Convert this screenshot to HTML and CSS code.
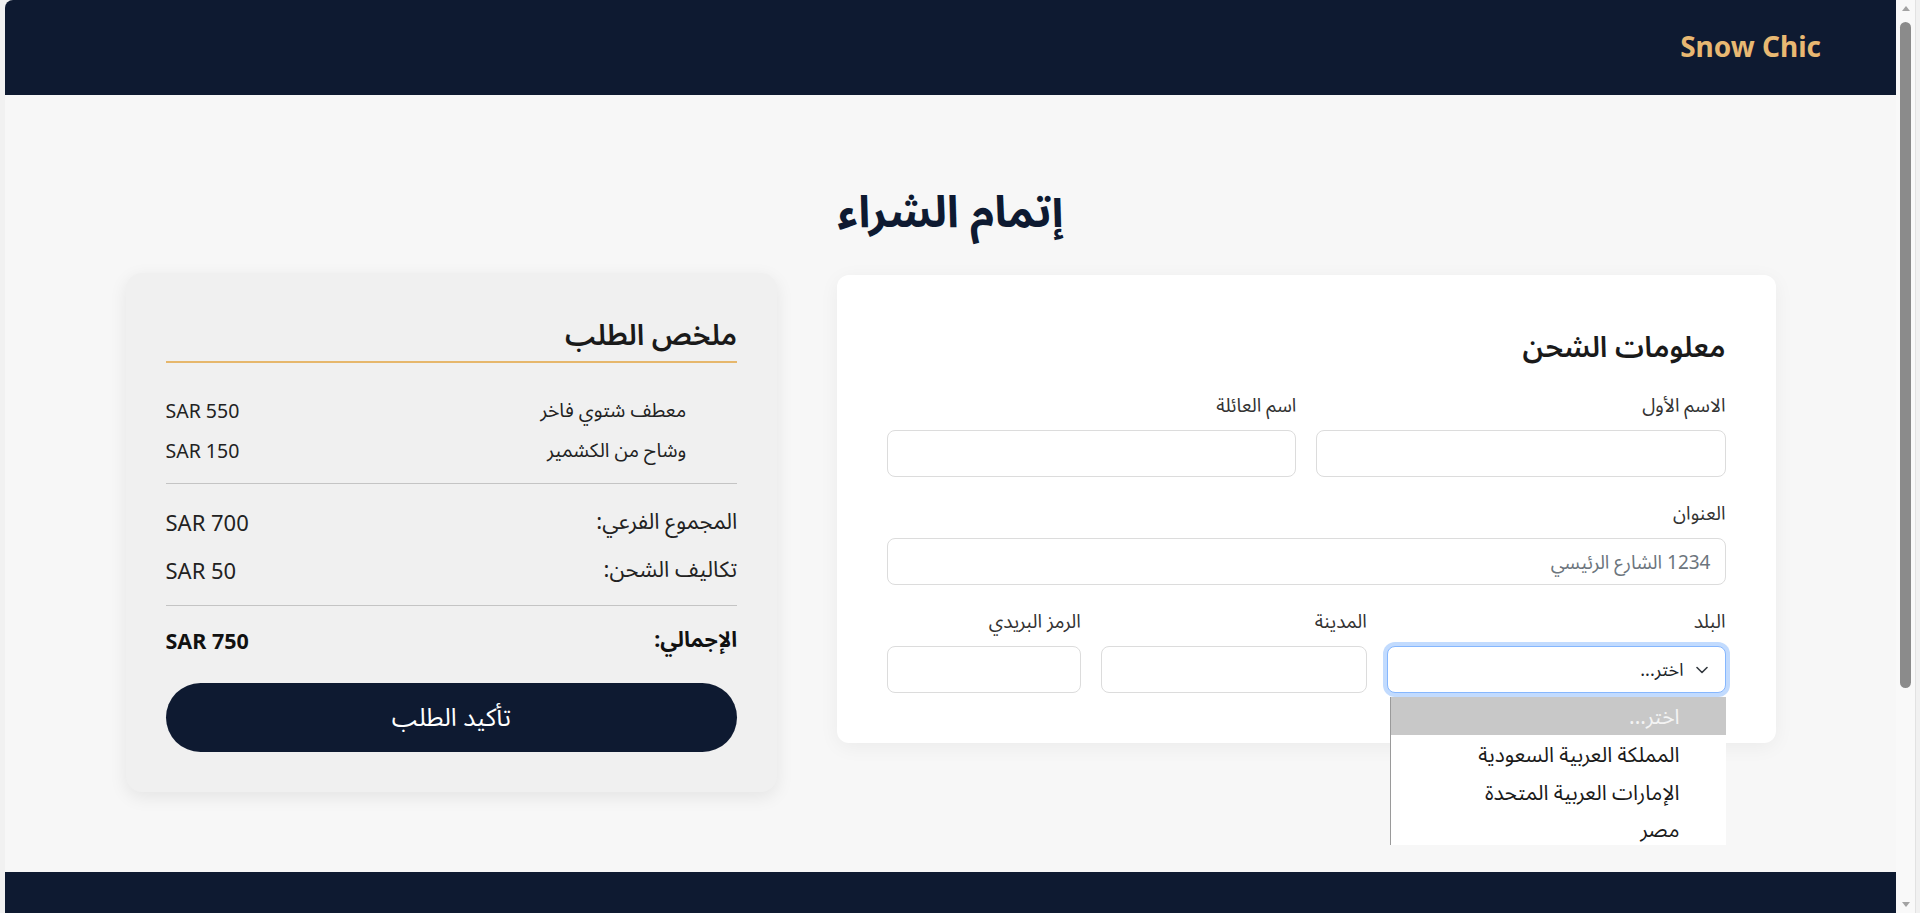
FILE: index.html
```html
<!DOCTYPE html>
<html lang="ar" dir="rtl">
  <head>
    <meta charset="utf-8">
    <title>إتمام الشراء - Snow Chic</title>
    <link rel="stylesheet" href="styles.css">
  </head>
  <body>
    <div class="window">
      <header class="site-header">
        <a class="logo" href="#">Snow Chic</a>
      </header>

      <main class="checkout">
        <h1 class="page-title">إتمام الشراء</h1>

        <div class="checkout-grid">
          <!-- Shipping form -->
          <section class="card shipping">
            <h2>معلومات الشحن</h2>

            <div class="row two">
              <div class="field">
                <label for="first-name">الاسم الأول</label>
                <input id="first-name" type="text">
              </div>
              <div class="field">
                <label for="last-name">اسم العائلة</label>
                <input id="last-name" type="text">
              </div>
            </div>

            <div class="field">
              <label for="address">العنوان</label>
              <input id="address" type="text" placeholder="1234 الشارع الرئيسي">
            </div>

            <div class="row three">
              <div class="field">
                <label>البلد</label>
                <div class="select focused">
                  <span>اختر...</span>
                  <svg class="chevron" width="12" height="8" viewBox="0 0 12 8"><path d="M1 1.5 L6 6.5 L11 1.5" fill="none" stroke="#343a40" stroke-width="1.6" stroke-linecap="round" stroke-linejoin="round"/></svg>
                  <ul class="options">
                    <li class="active">اختر...</li>
                    <li>المملكة العربية السعودية</li>
                    <li>الإمارات العربية المتحدة</li>
                    <li>مصر</li>
                  </ul>
                </div>
              </div>
              <div class="field">
                <label for="city">المدينة</label>
                <input id="city" type="text">
              </div>
              <div class="field">
                <label for="zip">الرمز البريدي</label>
                <input id="zip" type="text">
              </div>
            </div>
          </section>

          <!-- Order summary -->
          <aside class="card summary">
            <h2>ملخص الطلب</h2>
            <ul class="items">
              <li><span>معطف شتوي فاخر</span><span class="price">SAR 550</span></li>
              <li><span>وشاح من الكشمير</span><span class="price">SAR 150</span></li>
            </ul>
            <hr>
            <div class="line"><span>المجموع الفرعي:</span><span class="price">SAR 700</span></div>
            <div class="line"><span>تكاليف الشحن:</span><span class="price">SAR 50</span></div>
            <hr class="tight">
            <div class="line total"><span>الإجمالي:</span><span class="price">SAR 750</span></div>
            <button class="btn-confirm">تأكيد الطلب</button>
          </aside>
        </div>
      </main>

      <footer class="site-footer"></footer>
    </div>

    <div class="scrollbar">
      <span class="arrow up"></span>
      <span class="thumb"></span>
      <span class="arrow down"></span>
    </div>
  </body>
</html>
```

FILE: styles.css
```css
* {
  box-sizing: border-box;
}

body {
  margin: 0;
  height: 100vh;
  overflow: hidden;
  display: flex;
  direction: ltr;
  background-color: #f1f1f1;
  padding-left: 5px;
  font-family: "Noto Sans", "Noto Sans Arabic", "DejaVu Sans", sans-serif;
  color: #222;
}

.window {
  direction: rtl;
  flex: 1;
  min-width: 0;
  background-color: #f7f7f7;
  border-top-left-radius: 8px;
  overflow: hidden;
}

/* Header */
.site-header {
  height: 95px;
  background-color: #0e1a31;
  display: flex;
  align-items: center;
  padding: 0 75px 4px;
}

.logo {
  color: #e8b872;
  font-size: 28px;
  font-weight: 700;
  text-decoration: none;
}

/* Page */
.checkout {
  padding: 91px 0 80px;
}

.page-title {
  margin: 0 0 39px;
  text-align: center;
  font-size: 44px;
  line-height: 48px;
  font-weight: 700;
  color: #0e1a31;
}

.checkout-grid {
  max-width: 1650px;
  margin: 0 auto;
  display: grid;
  grid-template-columns: 1.44fr 1fr;
  gap: 60px;
  align-items: start;
}

.card h2 {
  margin: 0;
  font-size: 29px;
  line-height: 42px;
  font-weight: 600;
  color: #1a1a1a;
}

/* Shipping form */
.shipping {
  background-color: #fff;
  border-radius: 12px;
  padding: 50px;
  box-shadow: 0 4px 20px rgba(0, 0, 0, 0.05);
  margin-top: 2px;
}

.shipping h2 {
  margin-bottom: 26px;
}

.row {
  display: grid;
  gap: 20px;
}

.row.two {
  grid-template-columns: 1fr 1fr;
}

.row.three {
  grid-template-columns: 7fr 5.5fr 4fr;
}

.field {
  margin-bottom: 24px;
}

.row.three .field {
  margin-bottom: 0;
}

.field label {
  display: block;
  font-size: 19px;
  line-height: 25px;
  margin-bottom: 12px;
  color: #333;
}

.field input,
.select {
  width: 100%;
  height: 47px;
  border: 1px solid #dcdcdc;
  border-radius: 8px;
  background-color: #fff;
  padding: 0 14px;
  font-family: inherit;
  font-size: 19px;
  color: #212529;
}

.field input::placeholder {
  color: #6c757d;
}

.select {
  position: relative;
  display: flex;
  align-items: center;
  gap: 12px;
  padding-right: 17px;
  font-size: 18px;
}

.select.focused {
  border-color: #86b7fe;
  box-shadow: 0 0 0 4px rgba(13, 110, 253, 0.25);
}

.chevron {
  order: -1;
}

/* open option list of the country select */
.options {
  position: absolute;
  top: 50px;
  right: -1px;
  left: 2px;
  margin: 0;
  padding: 0;
  list-style: none;
  background-color: #fff;
  border-left: 1px solid #9a9a9a;
  z-index: 5;
}

.options li {
  height: 38px;
  line-height: 38px;
  padding-right: 46px;
  font-size: 21px;
  color: #1a1a1a;
}

.options li:last-child {
  height: 34px;
  line-height: 36px;
}

.options li.active {
  background-color: #c8c8c8;
  color: #f4f4f4;
}

/* Summary */
.summary {
  background-color: #f0f0f0;
  border-radius: 16px;
  padding: 40px;
  box-shadow: 0 5px 18px rgba(0, 0, 0, 0.08);
}

.summary h2 {
  padding-bottom: 6px;
  border-bottom: 2px solid #e6b76c;
}

.items {
  list-style: none;
  margin: 27px 0 0;
  padding: 0 51px 0 0;
}

.items li {
  display: flex;
  justify-content: space-between;
  align-items: center;
  height: 40px;
  font-size: 19.5px;
  color: #222;
}

.price {
  direction: ltr;
}

.summary hr {
  border: 0;
  border-top: 1px solid #c4c4c4;
  margin: 13px 0 14px;
}

.summary hr.tight {
  margin: 11px 0 10px;
}

.line {
  display: flex;
  justify-content: space-between;
  align-items: center;
  height: 48px;
  font-size: 22px;
  color: #222;
}

.line.total {
  font-weight: 700;
  font-size: 21.5px;
  color: #111;
}

.btn-confirm {
  display: block;
  width: 100%;
  height: 69px;
  margin-top: 19px;
  border: 0;
  border-radius: 35px;
  background-color: #0e1a31;
  color: #fff;
  font-family: inherit;
  font-size: 25px;
  cursor: pointer;
}

.site-footer {
  height: 120px;
  background-color: #0e1a31;
}

/* Window scrollbar */
.scrollbar {
  width: 20px;
  margin-right: 4px;
  background-color: #f9f9f9;
  border-right: 1px solid #e2e2e2;
  display: flex;
  flex-direction: column;
  align-items: center;
  padding: 6px 0 6px;
}

.scrollbar .thumb {
  width: 11px;
  height: 666px;
  margin: 11px 0 auto;
  border-radius: 6px;
  background-color: #8b8b8b;
}

.arrow {
  width: 0;
  height: 0;
  border-left: 4px solid transparent;
  border-right: 4px solid transparent;
}

.arrow.up {
  border-bottom: 5px solid #a3a3a3;
}

.arrow.down {
  border-top: 5px solid #a3a3a3;
}
```
